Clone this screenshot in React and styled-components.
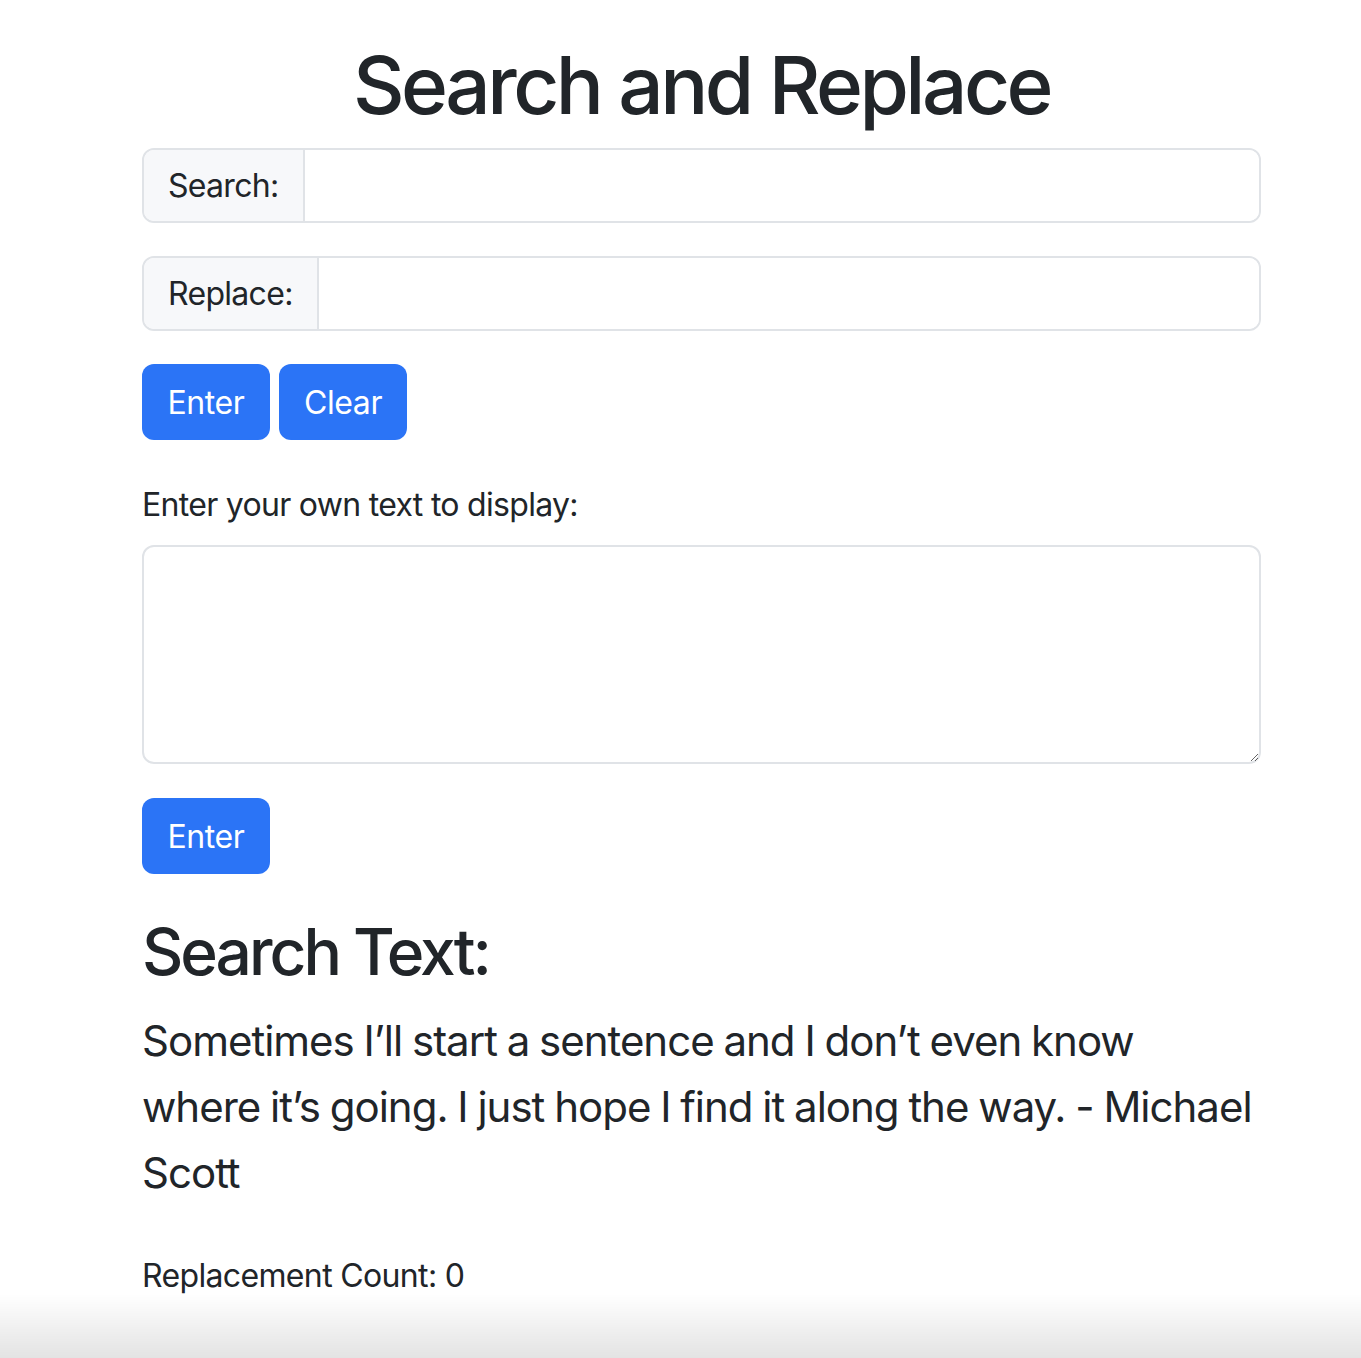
import React, { useState } from "react";
import styled, { createGlobalStyle } from "styled-components";

const GlobalStyle = createGlobalStyle`
  html, body { margin: 0; padding: 0; background: #ffffff; }
  body {
    font-family: Inter, "Noto Sans", "Liberation Sans", sans-serif;
    color: #212529;
    font-size: 32px;
    line-height: 1.5;
  }
  * { box-sizing: border-box; }
`;

const Page = styled.main`
  width: 1119px;
  margin-left: 142px;
  padding-bottom: 60px;
`;

const Title = styled.h1`
  margin: 37px 0 15px;
  font-size: 80px;
  font-weight: 500;
  line-height: 96px;
  text-align: center;
  letter-spacing: -3.5px;
`;

const InputGroup = styled.div`
  display: flex;
  height: 75px;
  border: 2px solid #e0e3e7;
  border-radius: 12px;
  overflow: hidden;
  margin-bottom: ${(p) => p.$mb || 0}px;
`;

const GroupLabel = styled.span`
  display: flex;
  align-items: center;
  padding: 0 24px;
  background: #f7f8fa;
  border-right: 2px solid #e0e3e7;
  font-size: 32px;
  letter-spacing: -0.7px;
`;

const TextInput = styled.input`
  flex: 1;
  border: none;
  outline: none;
  font: inherit;
  padding: 0 24px;
  background: #fff;
`;

const ButtonRow = styled.div`
  display: flex;
  gap: 9px;
  margin-bottom: ${(p) => p.$mb || 0}px;
`;

const Button = styled.button`
  width: 128px;
  height: 76px;
  border: none;
  border-radius: 12px;
  background: #2b74f6;
  color: #fff;
  font-family: inherit;
  font-size: 32px;
  letter-spacing: -0.4px;
  padding: 0;
  cursor: pointer;
`;

const FieldLabel = styled.label`
  display: block;
  font-size: 32px;
  line-height: 48px;
  letter-spacing: -0.7px;
  margin-bottom: 16px;
`;

const TextArea = styled.textarea`
  display: block;
  width: 100%;
  height: 219px;
  border: 2px solid #e0e3e7;
  border-radius: 12px;
  font: inherit;
  padding: 12px 24px;
  outline: none;
  margin-bottom: 34px;
`;

const SubTitle = styled.h2`
  margin: 39px 0 18px;
  font-size: 64px;
  font-weight: 500;
  line-height: 77px;
  letter-spacing: -3px;
`;

const Quote = styled.p`
  margin: 0 0 46px;
  font-size: 42px;
  line-height: 66px;
  letter-spacing: -1px;
  word-spacing: -1px;
`;

const Count = styled.p`
  margin: 0;
  font-size: 32px;
  line-height: 48px;
  letter-spacing: -0.65px;
`;

const BottomShade = styled.div`
  position: fixed;
  left: 0;
  right: 0;
  bottom: 0;
  height: 64px;
  pointer-events: none;
  background: linear-gradient(to bottom, rgba(0,0,0,0), rgba(0,0,0,0.11));
`;

export default function App() {
  const [search, setSearch] = useState("");
  const [replace, setReplace] = useState("");
  const [custom, setCustom] = useState("");
  return (
    <>
      <GlobalStyle />
      <Page>
        <Title>Search and Replace</Title>
        <InputGroup $mb={33}>
          <GroupLabel>Search:</GroupLabel>
          <TextInput value={search} onChange={(e) => setSearch(e.target.value)} />
        </InputGroup>
        <InputGroup $mb={33}>
          <GroupLabel>Replace:</GroupLabel>
          <TextInput value={replace} onChange={(e) => setReplace(e.target.value)} />
        </InputGroup>
        <ButtonRow $mb={41}>
          <Button>Enter</Button>
          <Button onClick={() => { setSearch(""); setReplace(""); }}>Clear</Button>
        </ButtonRow>
        <FieldLabel>Enter your own text to display:</FieldLabel>
        <TextArea value={custom} onChange={(e) => setCustom(e.target.value)} />
        <ButtonRow>
          <Button>Enter</Button>
        </ButtonRow>
        <SubTitle>Search Text:</SubTitle>
        <Quote>
          Sometimes I’ll start a sentence and I don’t even know where it’s going. I just hope I find it along the way. - Michael Scott
        </Quote>
        <Count>Replacement Count: 0</Count>
      </Page>
      <BottomShade />
    </>
  );
}
